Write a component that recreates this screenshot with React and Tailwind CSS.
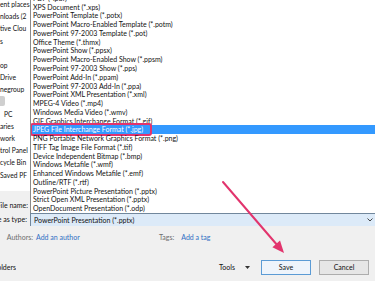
import React from "react";

const items = [
  "PDF (*.pdf)",
  "XPS Document (*.xps)",
  "PowerPoint Template (*.potx)",
  "PowerPoint Macro-Enabled Template (*.potm)",
  "PowerPoint 97-2003 Template (*.pot)",
  "Office Theme (*.thmx)",
  "PowerPoint Show (*.ppsx)",
  "PowerPoint Macro-Enabled Show (*.ppsm)",
  "PowerPoint 97-2003 Show (*.pps)",
  "PowerPoint Add-In (*.ppam)",
  "PowerPoint 97-2003 Add-In (*.ppa)",
  "PowerPoint XML Presentation (*.xml)",
  "MPEG-4 Video (*.mp4)",
  "Windows Media Video (*.wmv)",
  "GIF Graphics Interchange Format (*.gif)",
  "JPEG File Interchange Format (*.jpg)",
  "PNG Portable Network Graphics Format (*.png)",
  "TIFF Tag Image File Format (*.tif)",
  "Device Independent Bitmap (*.bmp)",
  "Windows Metafile (*.wmf)",
  "Enhanced Windows Metafile (*.emf)",
  "Outline/RTF (*.rtf)",
  "PowerPoint Picture Presentation (*.pptx)",
  "Strict Open XML Presentation (*.pptx)",
  "OpenDocument Presentation (*.odp)",
];

const nav = [
  "ent places",
  "nloads (2",
  "tive Clou",
  "s",
  "",
  "op",
  "Drive",
  "negroup",
  "",
  "PC",
  "aries",
  "work",
  "trol Panel",
  "cycle Bin",
  "Saved PF",
];

export default function App() {
  return (
    <div className="relative w-[375px] h-[281px] overflow-hidden bg-[#f0f0f0] flex flex-col font-['Lato',sans-serif] text-[7px] text-[#111]">
      {/* top: nav + file list */}
      <div className="h-[191px] flex bg-white shrink-0">
        <div className="w-[30px] overflow-hidden text-[6.7px]">
          <div className="-mt-[2px] flex flex-col">
            {nav.map((n, i) => (
              <div
                key={i}
                className={
                  "h-[12.2px] leading-[12.2px] whitespace-nowrap " +
                  (n === "PC" ? "pl-[4px] relative" : "")
                }
              >
                {n === "PC" && (
                  <span className="absolute left-0 top-[-12px] w-[5px] h-[10px] bg-[#cfcfcf] rounded-r-[2px]" />
                )}
                {n}
              </div>
            ))}
          </div>
        </div>
        <div className="flex-1" />
      </div>

      {/* File name row */}
      <div className="mt-[8px] h-[12px] flex items-center shrink-0">
        <div className="w-[28px] flex justify-end overflow-hidden whitespace-nowrap">
          File name:
        </div>
      </div>

      {/* Save as type row */}
      <div className="mt-[2px] h-[13px] flex items-center shrink-0">
        <div className="w-[30px] pr-[3px] flex justify-end overflow-hidden whitespace-nowrap">
          Save as type:
        </div>
        <div className="flex-1 h-full flex items-center justify-between bg-[#dceaf8] border-t border-[#71879c] border-l border-[#9cc0e4] pl-[3px] pr-[2px]">
          <span className="whitespace-nowrap">PowerPoint Presentation (*.pptx)</span>
          <svg width="6" height="4" viewBox="0 0 6 4">
            <path d="M0.5 0.5 L3 3 L5.5 0.5" fill="none" stroke="#333" strokeWidth="0.9" />
          </svg>
        </div>
      </div>

      {/* Authors / Tags row */}
      <div className="mt-[5px] h-[12px] flex items-center shrink-0 whitespace-nowrap">
        <div className="w-[33px] flex justify-end text-[#6d6d6d]">Authors:</div>
        <div className="ml-[3px] w-[123px] text-[#2f6fc4]">Add an author</div>
        <div className="text-[#6d6d6d]">Tags:</div>
        <div className="ml-[7px] text-[#2f6fc4]">Add a tag</div>
      </div>

      {/* Bottom row */}
      <div className="mt-[17px] h-[15px] flex items-center justify-between shrink-0 pr-[6px]">
        <div className="w-[16px] flex justify-end overflow-hidden whitespace-nowrap">
          Hide Folders
        </div>
        <div className="flex items-center">
          <span>Tools</span>
          <svg width="5" height="3" viewBox="0 0 5 3" className="ml-[10px]">
            <path d="M0 0 L5 0 L2.5 3 Z" fill="#333" />
          </svg>
          <button className="ml-[11px] w-[50px] h-[15px] border border-[#5b9bd5] bg-[#eef4fb] text-[#111] leading-none">
            Save
          </button>
          <button className="ml-[8px] w-[50px] h-[15px] border border-[#adadad] bg-[#e6e6e6] text-[#111] leading-none">
            Cancel
          </button>
        </div>
      </div>

      {/* Open dropdown list overlay */}
      <div className="absolute left-[30px] top-0 right-0 h-[213px] bg-white border-l border-[#8a8a8a] overflow-hidden flex flex-col justify-end">
        {items.map((t, i) => {
          const sel = t.startsWith("JPEG");
          return (
            <div
              key={i}
              className={
                "relative h-[8.78px] leading-[8.78px] pl-[2px] whitespace-nowrap shrink-0 " +
                (sel ? "bg-[#3399ff] text-white" : "")
              }
            >
              {t}
              {sel && (
                <span className="absolute left-[-1px] top-[-2px] w-[122px] h-[12.5px] border-2 border-[#e2346d] rounded-[3px]" />
              )}
            </div>
          );
        })}
      </div>

      {/* annotation arrow */}
      <svg className="absolute inset-0 pointer-events-none" width="375" height="281" viewBox="0 0 375 281">
        <line x1="223" y1="182" x2="278" y2="246" stroke="#e2346d" strokeWidth="2" strokeLinecap="round" />
        <polygon points="284,253 272.4,247.2 280,240.6" fill="#e2346d" />
      </svg>
    </div>
  );
}
